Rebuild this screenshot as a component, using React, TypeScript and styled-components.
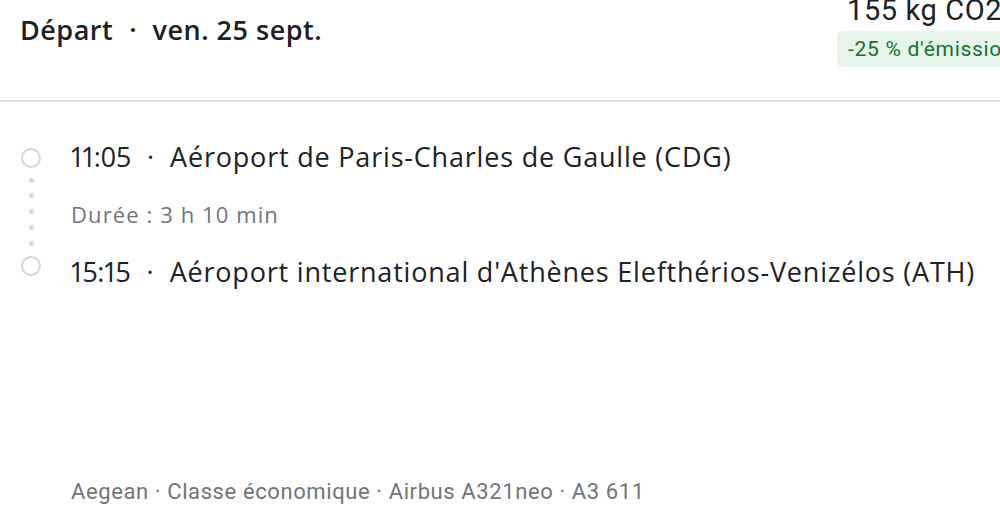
import styled, { createGlobalStyle } from 'styled-components';

const Global = createGlobalStyle`
  html, body { margin: 0; padding: 0; background: #fff; }
  body { font-family: Roboto, "Liberation Sans", sans-serif; color: #202124; }
`;

const Page = styled.div`
  width: 1000px;
  height: 519px;
  overflow: hidden;
  display: flex;
  flex-direction: column;
`;

const Header = styled.div`
  height: 100px;
  flex-shrink: 0;
  border-bottom: 2px solid #e0e0e3;
  display: flex;
  justify-content: space-between;
  align-items: flex-start;
  padding-left: 20px;
`;

const Title = styled.h2`
  margin: 10px 0 0;
  font-family: "Open Sans", Roboto, sans-serif;
  font-size: 27px;
  line-height: 40px;
  font-weight: 600;
  letter-spacing: 0.5px;
  color: #202124;
  white-space: nowrap;
`;

const Emissions = styled.div`
  width: 163px;
  margin-top: -6px;
  display: flex;
  flex-direction: column;
  align-items: stretch;
  white-space: nowrap;
  overflow: hidden;
`;

const Co2 = styled.div`
  font-size: 29px;
  line-height: 32px;
  letter-spacing: 0.6px;
  padding-left: 10px;
  color: #202124;
`;

const Badge = styled.div`
  margin-top: 5px;
  width: 200px;
  background: #e6f4ea;
  color: #137333;
  font-size: 21px;
  line-height: 36px;
  letter-spacing: 0.7px;
  padding-left: 11px;
  border-radius: 6px;
`;

const Body = styled.div`
  flex: 1;
  display: grid;
  grid-template-columns: 62px 1fr;
  column-gap: 9px;
`;

const Rail = styled.div`
  display: flex;
  flex-direction: column;
  align-items: center;
  padding-top: 46px;
`;

const Stop = styled.div`
  width: 16px;
  height: 16px;
  border: 2.5px solid #d3d5d9;
  box-sizing: content-box;
  border-radius: 50%;
  margin: -0.5px 0;
`;

const Dots = styled.div`
  display: flex;
  flex-direction: column;
  gap: 10.75px;
  padding: 10.5px 0 11px;
`;

const Dot = styled.div`
  width: 5px;
  height: 5px;
  border-radius: 50%;
  background: #d6d8dc;
`;

const Content = styled.div`
  display: flex;
  flex-direction: column;
  padding-top: 35px;
`;

const StopLine = styled.div<{ $gap?: number }>`
  margin-top: ${(p) => p.$gap ?? 0}px;
  font-family: "Open Sans", Roboto, sans-serif;
  font-size: 27px;
  line-height: 40px;
  letter-spacing: 0.8px;
  color: #202124;
  white-space: nowrap;
`;

const Time = styled.span`
  font-variant-numeric: proportional-nums;
  letter-spacing: -0.3px;
`;

const Duration = styled.div`
  margin-top: 22px;
  font-family: "Open Sans", Roboto, sans-serif;
  font-size: 22px;
  line-height: 30px;
  letter-spacing: 1.1px;
  color: #70757a;
`;

const Details = styled.div`
  margin-top: 185px;
  font-size: 22px;
  line-height: 30px;
  letter-spacing: 0.6px;
  color: #70757a;
  white-space: nowrap;
`;

const Sep = styled.span<{ $pad: number }>`
  display: inline-block;
  padding: 0 ${(p) => p.$pad}px;
  letter-spacing: 0;
`;

export default function App() {
  return (
    <Page>
      <Global />
      <Header>
        <Title>
          Départ<Sep $pad={16}>·</Sep>ven. 25 sept.
        </Title>
        <Emissions>
          <Co2>155 kg CO2e</Co2>
          <Badge>-25 % d'émissions</Badge>
        </Emissions>
      </Header>
      <Body>
        <Rail>
          <Stop />
          <Dots>
            <Dot />
            <Dot />
            <Dot />
            <Dot />
            <Dot />
          </Dots>
          <Stop />
        </Rail>
        <Content>
          <StopLine>
            <Time>11:05</Time>
            <Sep $pad={16}>·</Sep>Aéroport de Paris-Charles de Gaulle (CDG)
          </StopLine>
          <Duration>Durée : 3 h 10 min</Duration>
          <StopLine $gap={23}>
            <Time>15:15</Time>
            <Sep $pad={16}>·</Sep>Aéroport international d'Athènes Elefthérios-Venizélos (ATH)
          </StopLine>
          <Details>Aegean · Classe économique · Airbus A321neo · A3 611</Details>
        </Content>
      </Body>
    </Page>
  );
}
